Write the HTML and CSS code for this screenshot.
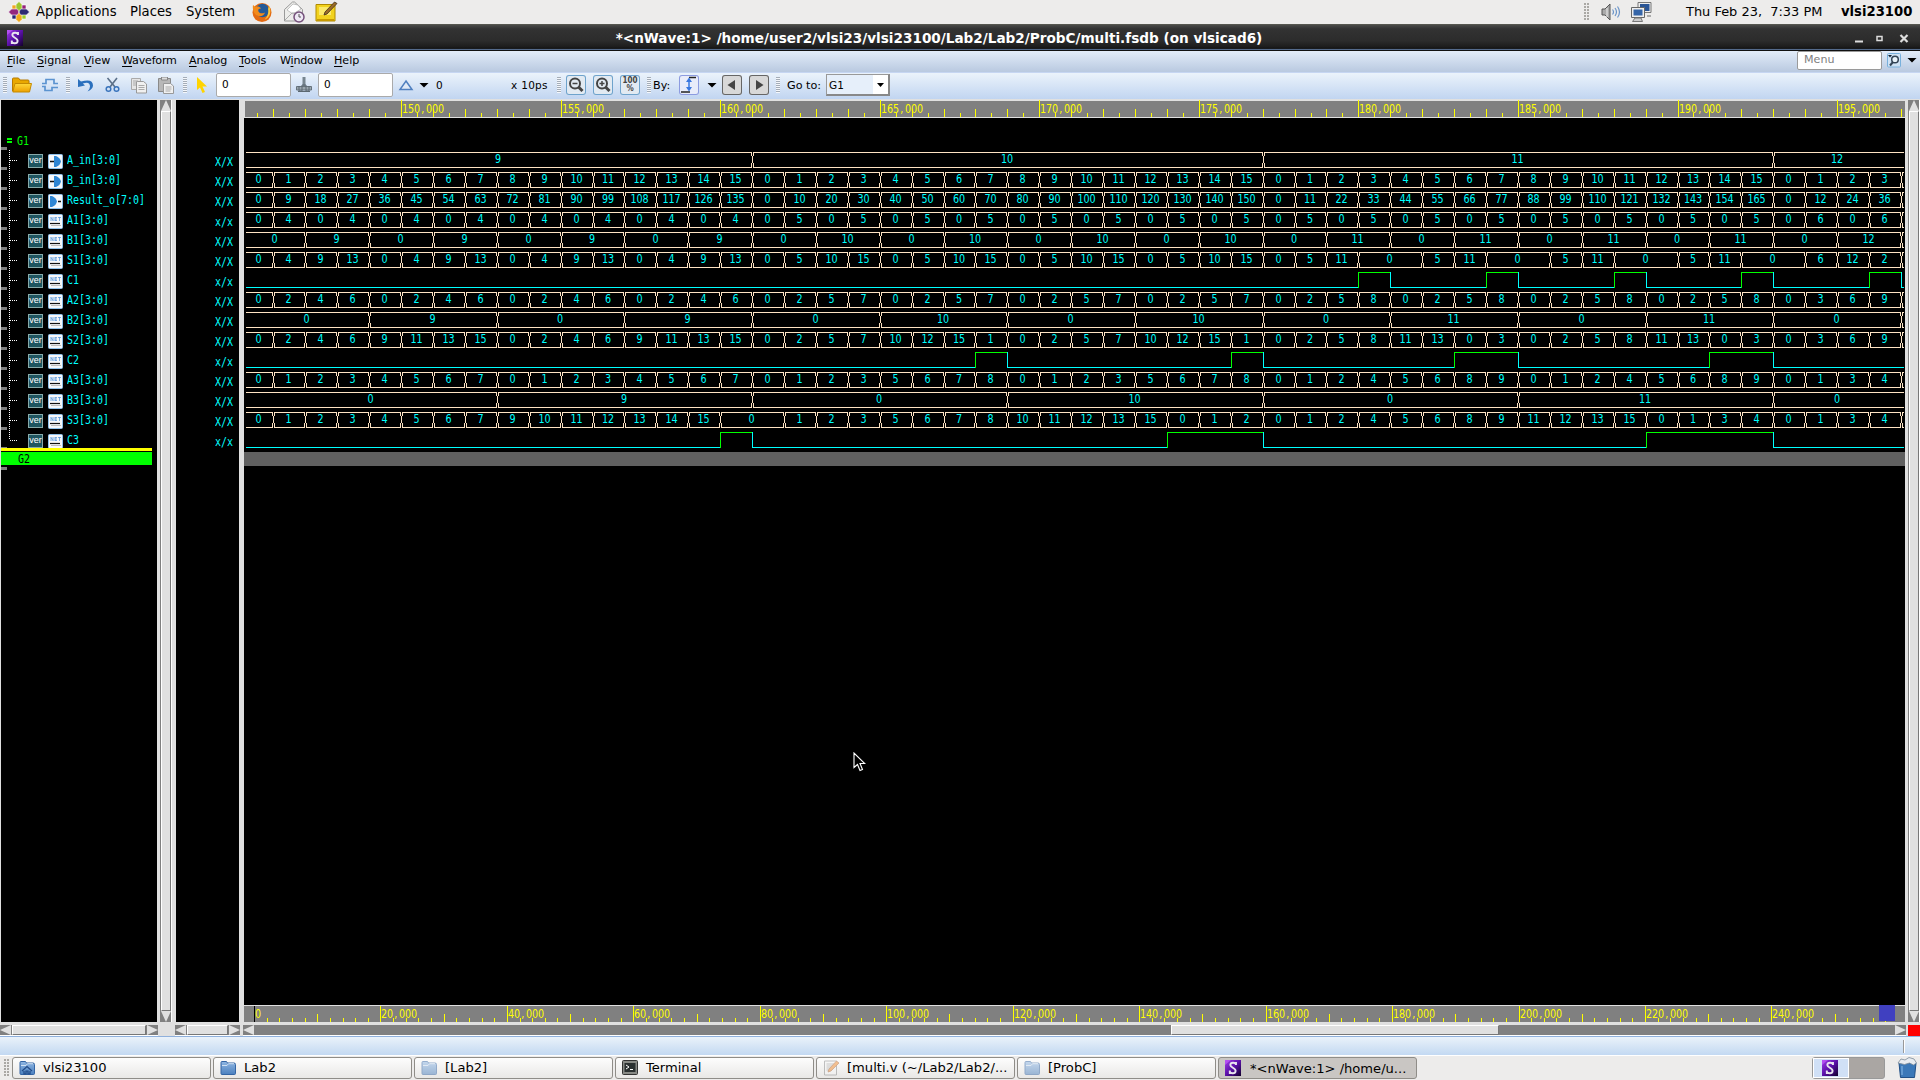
FILE: index.html
```html
<!DOCTYPE html>
<html lang="en">
<head>
<meta charset="utf-8">
<title>nWave</title>
<link rel="stylesheet" href="styles.css">
</head>
<body>
<svg width="0" height="0" class="defs">
  <defs>
    <linearGradient id="purple" x1="0" y1="0" x2="1" y2="1"><stop offset="0" stop-color="#a03ce8"/><stop offset=".5" stop-color="#5a10a8"/><stop offset="1" stop-color="#12002c"/></linearGradient>
    <linearGradient id="gold" x1="0" y1="0" x2="0" y2="1"><stop offset="0" stop-color="#ffd83a"/><stop offset="1" stop-color="#eda000"/></linearGradient>
    <linearGradient id="blue" x1="0" y1="0" x2="0" y2="1"><stop offset="0" stop-color="#8fb6e2"/><stop offset="1" stop-color="#4b80bf"/></linearGradient>
    <symbol id="nwave" viewBox="0 0 16 16"><rect width="16" height="16" fill="url(#purple)"/><path d="M0 5 6 0H0z" fill="#c860ff" opacity=".6"/><path d="M11 4.5C10.500 2.200 5.500 1.800 5.300 5c-.1 2.600 5.600 3 5.300 6-.3 3.400-5.400 2.700-6 .2M11 2v3M4.800 10.500v3.500" fill="none" stroke="#e8e4ee" stroke-width="1.900"/></symbol>
    <symbol id="folder" viewBox="0 0 16 16"><path d="M1 13.500V2.500q0-1 1-1h4.500l1 1.500H14q1.500 0 1.500 1.500v9q0 1-1 1H2q-1 0-1-1z" fill="url(#blue)" stroke="#3465a4"/><path d="M2 5.500h5l1.500-1.800H14" fill="none" stroke="#cfe0f3"/></symbol>
  </defs>
</svg>

<header class="panel">
  <svg class="start" width="22" height="22" viewBox="0 0 22 22"><g stroke="#fff" stroke-width=".6"><path d="M4 4h5v5H4z" fill="#efa724"/><path d="M13 4h5v5h-5z" fill="#932279"/><path d="M4 13h5v5H4z" fill="#262577"/><path d="M13 13h5v5h-5z" fill="#9ccd2a"/><path d="M11 .5 8 3.500v6l3 1.500 3-1.500v-6z" fill="#9bc62e"/><path d="M11 21.500 8 18.500v-6l3-1.500 3 1.500v6z" fill="#f0a81c"/><path d="M.5 11l3-3h6l1.500 3-1.500 3h-6z" fill="#94267e"/><path d="M21.500 11l-3-3h-6L11 11l1.500 3h6z" fill="#2d2a72"/></g></svg>
  <span class="apps">Applications</span><span class="places">Places</span><span class="system">System</span>
  <svg width="22" height="22" viewBox="0 0 22 22"><circle cx="11" cy="11.500" r="9.500" fill="#e36a12"/><circle cx="11.500" cy="9.500" r="6.800" fill="#235a98"/><path d="M2 4c1 1 2 2 4 1.500 2 0 3 .5 4 2-3 0-3 2-2.500 3 1 2 4 2.500 6.500 1-1 4-7 5-10 1.500C2 10.500 1.500 7 2 4z" fill="#f28a1a"/><path d="M18 5c3 5 1 12-5 14 3-2 5-7 4-11z" fill="#f9c840"/></svg>
  <svg class="mail" width="22" height="22" viewBox="0 0 22 22"><path d="M1.500 8.500 9.500 1h2l8 7.500V20h-18z" fill="#ececea" stroke="#999"/><path d="M4 9 10 3l5 1 3 4-8 5z" fill="#fff" stroke="#aaa" stroke-width=".7"/><path d="m2 19 7-7h3l6 7" fill="none" stroke="#aaa"/><circle cx="16" cy="16" r="5" fill="#eee8f4" stroke="#75507b" stroke-width="1.500"/><path d="M16 13v3h2" stroke="#555" fill="none"/></svg>
  <svg class="note" width="23" height="22" viewBox="0 0 23 22"><path d="M1 3.500h19V20H1z" fill="#f2d21e" stroke="#b08a00"/><path d="M4 6h12v8H4z" fill="#fbe96a"/><path d="M2 18h17v2H2z" fill="#c89a00"/><path d="m9 14 1-3L19.500 1 22 2.500 12 13z" fill="#9a6a28" stroke="#40301a" stroke-width=".8"/></svg>
  <i class="grip tray"></i>
  <svg class="sound" width="20" height="20" viewBox="0 0 20 20"><path d="M1 7h3l5-5v16l-5-5H1z" fill="#aaa" stroke="#555"/><path d="M6 6v9" stroke="#eee"/><path d="M11.500 7.500q2 2.500 0 5M14 6q3 4 0 8M16.500 4.500q4 5.500 0 11" fill="none" stroke="#6a94c8" stroke-width="1.200"/></svg>
  <svg class="net" width="22" height="22" viewBox="0 0 22 22"><path d="M8 1.500h13v10H8z" fill="#eee" stroke="#777"/><path d="M10 3h9.500v7H10z" fill="#2a5596"/><path d="M17 14h4v2h-4z" fill="#aaa"/><path d="M1.500 6.500h13v10h-13z" fill="#eee" stroke="#666"/><path d="M3.500 8.500h9v6h-9z" fill="#3565a8"/><path d="M5 17h6l1.500 3.500h-10z" fill="#ccc" stroke="#777"/></svg>
  <span class="clock">Thu Feb 23,&nbsp; 7:33 PM</span><b class="user">vlsi23100</b>
</header>

<div class="title">
  <svg class="appicon" width="16" height="16"><use href="#nwave"/></svg>
  <b>*&lt;nWave:1&gt; /home/user2/vlsi23/vlsi23100/Lab2/Lab2/ProbC/multi.fsdb (on vlsicad6)</b>
  <svg width="60" height="12" viewBox="0 0 60 12" class="winctl"><path d="M0 8.500h8" stroke="#ddd" stroke-width="2"/><path d="M22 3.500h5v4h-5z" fill="none" stroke="#ddd" stroke-width="1.500"/><path d="m45.500 2 7 7m0-7-7 7" stroke="#ddd" stroke-width="2.200"/></svg>
</div>

<nav class="menubar">
  <span><u>F</u>ile</span><span><u>S</u>ignal</span><span><u>V</u>iew</span><span><u>W</u>aveform</span><span><u>A</u>nalog</span><span><u>T</u>ools</span><span>W<u>i</u>ndow</span><span><u>H</u>elp</span>
  <div class="menusearch">Menu</div>
  <svg width="14" height="15" viewBox="0 0 14 15"><rect x=".5" y=".5" width="13" height="13.500" rx="1" fill="#cfe2f4" stroke="#78b0dc"/><circle cx="8" cy="6.500" r="3.300" fill="#e8f2fa" stroke="#345" stroke-width="1.500"/><path d="m6 9-3 3.500" stroke="#345" stroke-width="2"/><path d="M1 2h4L3 4.500z" fill="#123"/></svg>
  <i class="drop menudrop"></i>
</nav>

<div class="toolbar">
  <i class="bars"></i>
  <svg class="m5" width="20" height="16" viewBox="0 0 20 16"><path d="M.5 14V2q0-1 1-1h5l1.500 2h8q1 0 1 1v3" fill="#e9a800" stroke="#b87a00"/><path d="M.8 15 3 6.500h16.500L17.500 15z" fill="url(#gold)" stroke="#c58a00"/></svg>
  <svg class="m9" width="18" height="16" viewBox="0 0 18 16"><path d="M1 6.500h4V2.500h8v4h4M1 9.500h3v4h7v-3h6" fill="none" stroke="#5b93d0" stroke-width="1.700"/></svg>
  <i class="bars m7"></i>
  <svg class="m8" width="16" height="16" viewBox="0 0 16 16"><path d="M0 2v8l7-1.500-2.200-2Q12 4 12 9.500q0 2.500-2.500 5Q15 12 15 8.500 15 1 3 4.500z" fill="#2b70bd"/></svg>
  <svg class="m11" width="15" height="16" viewBox="0 0 15 16"><path d="M2.500 1 10 10M12 1 5 10" stroke="#5a6f88" stroke-width="1.600"/><circle cx="3.500" cy="12" r="2.300" fill="none" stroke="#3a74bc" stroke-width="1.500"/><circle cx="11.500" cy="12" r="2.300" fill="none" stroke="#3a74bc" stroke-width="1.500"/></svg>
  <svg class="m11" width="16" height="17" viewBox="0 0 16 17"><path d="M.5 1.500h9v11h-9z" fill="#e5e5e5" stroke="#aaa"/><path d="M5.500 4.500h7L15.500 7v9h-10z" fill="#f0f0f0" stroke="#999"/><path d="M2 4h5M2 6h3M2 8h3M7.500 8.500h6M7.500 10.500h6M7.500 12.500h6" stroke="#aaa"/></svg>
  <svg class="m11" width="16" height="17" viewBox="0 0 16 17"><path d="M.5 1.500h12v13H.5z" fill="#b8b8b8" stroke="#8a8a8a"/><path d="M3.500 0h6v3h-6z" fill="#ddd" stroke="#888"/><path d="M5.500 6.500h7l3 2.500v7.500h-10z" fill="#f0f0f0" stroke="#999"/><path d="M7.500 10h6M7.500 12h6M7.500 14h5" stroke="#aaa"/></svg>
  <i class="bars m9"></i>
  <svg class="m10" width="10" height="16" viewBox="0 0 10 16"><path d="M0 0v13l3-2.500L5.500 16 8 15 5.500 9.500H10z" fill="#ffd400"/></svg>
  <div class="field m9">0</div>
  <svg class="m5" width="16" height="16" viewBox="0 0 16 16"><path d="M8 0v9" stroke="#77858f" stroke-width="3"/><path d="M.5 9.500h15V13H.5z" fill="#9aa6ae" stroke="#66737c"/><path d="M3 9v5h3V8h4v6h3V9" fill="none" stroke="#5a6770"/><path d="M2 14.500h12" stroke="#5a6770"/></svg>
  <div class="field m6">0</div>
  <svg class="m5" width="16" height="12" viewBox="0 0 16 12"><path d="M8 2 14 10.500H2z" fill="#dfe9f6" stroke="#4f7fbf" stroke-width="1.500"/></svg>
  <i class="drop m5"></i>
  <span class="delta">0</span>
  <span class="scale">x 10ps</span>
  <i class="bars m8"></i>
  <svg class="btn m5" width="20" height="20" viewBox="0 0 20 20"><circle cx="9" cy="8.500" r="5" fill="none" stroke="#444" stroke-width="2"/><path d="m12.500 12 4 4" stroke="#444" stroke-width="3"/><path d="M6.500 8.500h5" stroke="#444" stroke-width="1.500"/></svg>
  <svg class="btn m7" width="20" height="20" viewBox="0 0 20 20"><circle cx="9" cy="8.500" r="5" fill="none" stroke="#444" stroke-width="2"/><path d="m12.500 12 4 4" stroke="#444" stroke-width="3"/><path d="M6.500 8.500h5M9 6v5" stroke="#444" stroke-width="1.500"/></svg>
  <div class="btn hundred m7"><span>100</span><span>%</span></div>
  <i class="bars m7"></i>
  <span class="by">By:</span>
  <svg class="btn lav" width="20" height="20" viewBox="0 0 20 20"><path d="M10 2.500h7M2 17h9" stroke="#222" stroke-width="1.300"/><path d="M10 5v10" stroke="#3a78e0" stroke-width="1.500"/><path d="M10 2.500 13 7H7zM10 16.500 7 12h6z" fill="#3a78e0"/></svg>
  <i class="drop m8"></i>
  <svg class="btn gray m5" width="20" height="20" viewBox="0 0 20 20"><path d="M13 5v10L5.500 10z" fill="#444"/></svg>
  <svg class="btn gray m7" width="20" height="20" viewBox="0 0 20 20"><path d="M7 5v10l7.500-5z" fill="#444"/></svg>
  <i class="bars m7"></i>
  <span class="goto">Go to:</span>
  <div class="select">G1<i><i class="drop"></i></i></div>
</div>

<main>
  <section class="signals" id="signals"></section>
  <div class="vbar left"><i class="up"></i><i class="thumb"></i><i class="down"></i></div>
  <section class="values" id="values"></section>
  <svg id="wave" width="1661" height="922" viewBox="244 100 1661 922"></svg>
  <div class="vbar right"><i class="up"></i><i class="thumb"></i><i class="down"></i></div>
</main>

<div class="hbars">
  <div class="hbar h1"><i class="lt"></i><i class="thumb"></i><i class="rt"></i></div>
  <div class="hbar h2"><i class="lt"></i><i class="thumb"></i><i class="rt"></i></div>
  <div class="hbar h3"><i class="lt"></i><i class="thumb"></i><i class="rt"></i></div>
  <div class="red"></div>
</div>
<div class="status"><i></i></div>

<footer>
  <i class="grip"></i>
  <div class="task"><svg width="16" height="16" viewBox="0 0 16 16"><use href="#folder"/><path d="m3 11 5-4.500 5 4.500M5 11v3h2v-3h2v3h2v-3" fill="none" stroke="#204a87" stroke-width="1.200"/></svg><span>vlsi23100</span></div>
  <div class="task"><svg width="16" height="16"><use href="#folder"/></svg><span>Lab2</span></div>
  <div class="task dim"><svg width="16" height="16"><use href="#folder"/></svg><span>[Lab2]</span></div>
  <div class="task"><svg width="16" height="16" viewBox="0 0 16 16"><rect x=".5" y=".5" width="15" height="14" rx="1" fill="#888a85" stroke="#333"/><path d="M2.500 3h11v9h-11z" fill="#2a3030"/><path d="m4 5 3 2-3 2M8 9.500h3" stroke="#fff" fill="none"/></svg><span>Terminal</span></div>
  <div class="task dim"><svg width="16" height="16" viewBox="0 0 16 16"><path d="M1.500 1h12v14h-12z" fill="#f4f4f4" stroke="#888"/><path d="M3.500 4h8M3.500 6h7M3.500 8h5M3.500 10h4" stroke="#999"/><path d="m5 12 1-3 7.500-8L16 3l-8 8z" fill="#f08a2c" stroke="#a0501a" stroke-width=".7"/></svg><span>[multi.v (~/Lab2/Lab2/...</span></div>
  <div class="task dim"><svg width="16" height="16"><use href="#folder"/></svg><span>[ProbC]</span></div>
  <div class="task active"><svg width="16" height="16"><use href="#nwave"/></svg><span>*&lt;nWave:1&gt; /home/u...</span></div>
  <div class="pager"><div><svg width="16" height="16"><use href="#nwave"/></svg></div></div>
  <svg class="trash" width="21" height="22" viewBox="0 0 21 22"><path d="M2 6h17l-1.500 14.500h-14z" fill="#3a78b8" stroke="#1f4f86"/><path d="M1 6 4 2l4 1 4-2.500L17 2l2.500 4-3 2-4-2-5 1.500z" fill="#e8ecf0" stroke="#7b8a98" stroke-width=".8"/><path d="M5 9v9" stroke="#6fa4d8" stroke-width="1.500"/></svg>
</footer>

<svg class="pointer" width="13" height="20" viewBox="0 0 13 20"><path d="M1 1v14.500l3.500-3L7 18.500l2.500-1L7 11.500h4.800z" fill="#000" stroke="#fff" stroke-width="1.100"/></svg>

<script src="wave.js"></script>
</body>
</html>
```
FILE: styles.css
```css
* { box-sizing: border-box; }
body { margin: 0; width: 1920px; height: 1080px; overflow: hidden; background: #e0e0e0; font-family: "DejaVu Sans", sans-serif; color: #000; display: flex; flex-direction: column; }
svg { display: block; flex: none; }
.defs { position: absolute; }
i { display: block; flex: none; }

.panel { height: 25px; flex: none; display: flex; align-items: center; background: #edeceb; border-bottom: 1px solid #55564f; font-size: 13.2px; line-height: 22px; white-space: nowrap; padding: 0 7px 1px 8px; }
.start { margin-right: 6px; }
.apps { width: 94px; }
.places { width: 56px; }
.system { width: 65px; }
.mail { margin-left: 10px; }
.note { margin-left: 10px; }
.grip { width: 6px; height: 18px; background: radial-gradient(circle at 1px 1px, #a8a6a2 0.7px, transparent 1px) 0 0 / 3px 3px; }
.tray { margin-left: auto; margin-right: 11px; }
.net { margin-left: 9px; }
.clock { width: 155px; margin-left: 34px; font-size: 12.95px; }
.user { width: 72px; }

.title { height: 26px; flex: none; display: flex; align-items: center; background: linear-gradient(#4a4a48, #323232 15%, #2c2c2c 60%, #1c1c1c 85%, #111 90%, #5a7296 94%, #111 97%); color: #fff; font-size: 13.6px; padding: 0 5px 0 7px; }
.title b { flex: 1; text-align: center; white-space: nowrap; margin-bottom: 1px; }
.winctl { margin-top: 1px; }

.menubar { height: 22px; flex: none; display: flex; align-items: center; padding: 0 3px 3px 7px; background: linear-gradient(#e2ecf9, #b9c9e0); border-bottom: 1px solid #c6d6f2; font-size: 11.1px; white-space: nowrap; }
.menubar span { flex: none; }
.menubar span:nth-of-type(1) { width: 30px; }
.menubar span:nth-of-type(2) { width: 47px; }
.menubar span:nth-of-type(3) { width: 38px; }
.menubar span:nth-of-type(4) { width: 67px; letter-spacing: -0.2px; }
.menubar span:nth-of-type(5) { width: 50px; }
.menubar span:nth-of-type(6) { width: 41px; }
.menubar span:nth-of-type(7) { width: 54px; letter-spacing: -0.2px; }
.menubar span:nth-of-type(8) { width: 40px; }
.menubar u { text-underline-offset: 2px; }
.menusearch { width: 85px; height: 19px; margin-left: auto; margin-right: 5px; border: 1px solid #9a9a9a; border-radius: 2px; background: #fff; color: #808080; padding: 0 6px; line-height: 16px; }
.drop { width: 10px; height: 5px; background: #000; clip-path: polygon(0 0, 100% 0, 50% 100%); }
.menudrop { margin-left: 6px; }

.toolbar { height: 26px; flex: none; display: flex; align-items: center; padding: 0 0 2px 3px; background: linear-gradient(#ebf3fb, #c1d5f1); font-size: 11.2px; white-space: nowrap; }
.bars { width: 4px; height: 16px; background: repeating-linear-gradient(#a4adb8 0 1px, #f4f7fb 1px 2px); }
.m5 { margin-left: 5px; } .m6 { margin-left: 6px; } .m7 { margin-left: 7px; } .m8 { margin-left: 8px; }
.m9 { margin-left: 9px; } .m10 { margin-left: 10px; } .m11 { margin-left: 11px; }
.field { width: 75px; height: 24px; border: 1px solid #aaa; border-radius: 2px; background: #fff; padding: 0 5px; line-height: 20px; font-size: 10.500px; }
.delta { margin-left: 7px; width: 75px; font-size: 10.500px; }
.scale { width: 38px; font-size: 10.500px; letter-spacing: .3px; }
.btn { width: 20px; height: 20px; border-radius: 3px; background: #e2eaf2; box-shadow: inset 0 0 0 1px #6ea3cc; }
.hundred { display: flex; flex-direction: column; align-items: center; justify-content: center; font: bold 8px/8px "DejaVu Sans Condensed", "DejaVu Sans", sans-serif; color: #444; }
.lav { box-shadow: inset 0 0 0 1px #8c9be0; background: #e8ecfa; }
.gray { box-shadow: inset 0 0 0 1px #666; background: #d8d8d8; }
.by { width: 26px; margin-left: 2px; }
.goto { width: 39px; margin-left: 7px; }
.select { width: 64px; height: 22px; background: #e6effa; border: 1px solid #999; border-right: 2px solid #888; border-bottom: 2px solid #888; display: flex; justify-content: space-between; align-items: center; padding-left: 2px; font-size: 10.500px; }
.select > i { width: 15px; height: 19px; background: #fff; padding: 8px 0 0 4px; }
.select .drop { width: 7px; height: 4px; }

main { height: 923px; flex: none; display: flex; padding: 1px 0 0 1px; }
.signals { width: 156px; background: #000; padding-top: 30px; overflow: hidden; }
.row { height: 20px; display: flex; position: relative; align-items: center; color: #0ff; font: 12px "DejaVu Sans Mono", monospace; }
.row::after { content: ""; position: absolute; left: 0; top: 17px; width: 6px; height: 3px; background: #808080; }
.row .txt { transform: scaleX(.83); transform-origin: left; white-space: pre; line-height: 16px; }
.row.group { color: #0f0; padding: 1px 0 0 6px; }
.row.group .eq { width: 5px; height: 5px; border: solid #0f0; border-width: 2px 0; margin-right: 5px; }
.tree { width: 20px; height: 20px; margin: 0 0 0 7px; }
.ver { width: 15px; height: 14px; border: 1px solid #8aa; background: #1f5560; color: #fff; font: 9px/11px "Liberation Sans", sans-serif; text-align: center; margin-right: 5px; position: relative; top: 1px; }
.kind { margin-right: 4px; position: relative; top: 1px; }
.row.sel { width: 151px; height: 17px; margin-top: -2px; border-top: 3px solid #ff0; padding: 1px 0 0 17px; color: #000; background: linear-gradient(#000 1px, #0f0 1px); }
.row.sel::after { top: 16px; }
.vbar { width: 12px; margin: 0 4px 0 3px; background: #808080; border-left: 1px solid #808080; border-right: 1px solid #fff; display: flex; flex-direction: column; }
.vbar.right { margin-right: 0; }
.up, .down { height: 11px; background: #e0e0e0; }
.up { clip-path: polygon(50% 0, 100% 100%, 0 100%); }
.down { clip-path: polygon(0 0, 100% 0, 50% 100%); }
.vbar .thumb { flex: 1; background: #e0e0e0; border: 1px solid #fff; border-right: 1px solid #777; border-bottom-color: #777; }
.values { width: 63px; background: #000; padding-top: 52px; margin-right: 5px; }
.values div { height: 20px; padding-left: 39px; color: #0ff; font: 12px/20px "DejaVu Sans Mono", monospace; }
.values span { display: inline-block; transform: scaleX(.83); transform-origin: left; }
#wave { background: #000; }
#wave text { font: 12px "DejaVu Sans", sans-serif; }

.hbars { height: 14px; flex: none; padding: 3px 0 0; display: flex; }
.hbar { height: 11px; background: #808080; display: flex; border-bottom: 1px solid #fff; }
.h1 { width: 158px; margin-right: 17px; }
.h2 { width: 65px; margin-right: 3px; }
.h3 { width: 1663px; margin-right: 2px; }
.lt, .rt { width: 11px; background: #e0e0e0; }
.lt { clip-path: polygon(0 50%, 100% 0, 100% 100%); }
.rt { clip-path: polygon(0 0, 100% 50%, 0 100%); }
.hbar .thumb { flex: 1; background: #e0e0e0; border: 1px solid #fff; border-right-color: #777; border-bottom-color: #777; margin: 0 1px; }
.h3 .thumb { flex: none; width: 328px; margin-left: 917px; margin-right: auto; }
.red { width: 12px; height: 12px; background: #f00; }

.status { height: 19px; flex: none; background: linear-gradient(#eaf2fa, #c3d9f2); border-top: 1px solid #8fb0dc; display: flex; align-items: center; justify-content: flex-end; padding-right: 15px; }
.status i { width: 2px; height: 13px; background: #999; border-right: 1px solid #fff; }

footer { height: 25px; flex: none; background: #edeceb; border-top: 1px solid #fff; display: flex; align-items: center; padding-left: 4px; font-size: 13.1px; }
footer .grip { margin-right: 2px; }
.task { width: 199px; height: 22px; margin-right: 2px; border: 1px solid #8f8d88; border-radius: 3px; background: linear-gradient(#fdfdfd, #e9e8e6); display: flex; align-items: center; padding-left: 6px; gap: 8px; flex: none; white-space: nowrap; }
.task span { margin-bottom: 2px; }
.task.dim svg { opacity: .5; }
.task.active { background: #c9c6c3; }
.task.active span { margin: 0 0 0 1px; }
.pager { width: 73px; height: 22px; margin-left: auto; background: #aaa6a3; border-radius: 3px; border: 1px solid #999; }
.pager div { width: 36px; height: 20px; border: 1px solid #fff; background: #d0e0f6; padding: 1px 0 0 8px; }
.trash { margin: 0 2px 0 12px; }
.pointer { position: absolute; left: 853px; top: 752px; }
```
FILE: wave.js
```js
const SIGNALS = ['A_in[3:0]', 'B_in[3:0]', 'Result_o[7:0]', 'A1[3:0]', 'B1[3:0]', 'S1[3:0]', 'C1', 'A2[3:0]', 'B2[3:0]', 'S2[3:0]', 'C2', 'A3[3:0]', 'B3[3:0]', 'S3[3:0]', 'C3'];
const LEFT = 246, RIGHT = 1904;

// 4x4 shift-and-add multiplier: every internal bus at time t (in thousands)
function sample(t) {
  const a = 9 + Math.floor((t - 145) / 16), b = (t - 145) % 16;
  const a1 = b & 1 ? a >> 1 : 0, b1 = b & 2 ? a : 0, s1 = a1 + b1;
  const a2 = s1 >> 1, b2 = b & 4 ? a : 0, s2 = a2 + b2;
  const a3 = s2 >> 1, b3 = b & 8 ? a : 0, s3 = a3 + b3;
  return [a, b, a * b, a1, b1, s1 & 15, s1 >> 4, a2, b2, s2 & 15, s2 >> 4, a3, b3, s3 & 15, s3 >> 4];
}

const xAt = t => Math.round(401.1 + 31.91 * (t - 150));

function label(x, y, str, color) {
  const pos = [...str].map((c, i) => (i * 7.5 + (c === ',' ? 1.5 : 0)).toFixed(1)).join(' ');
  return `<text transform="translate(${x} ${y}) scale(.8 1)" x="${pos}" fill="${color}">${str}</text>`;
}
const line = (d, color) => `<path d="${d}" stroke="${color}" fill="none" shape-rendering="crispEdges"/>`;

function segments(row) {
  const out = [];
  for (let t = 145; t <= 197; t++) {
    const v = sample(t)[row], last = out[out.length - 1];
    if (last && last.v === v) continue;
    if (last) last.end = xAt(t);
    out.push({ v, start: out.length ? xAt(t) : LEFT, end: RIGHT });
  }
  return out;
}

function bus(row, top) {
  let d = '', t = '';
  segments(row).forEach((s, i) => {
    const l = i ? s.start + 1 : s.start, r = s.end === RIGHT ? RIGHT : s.end;
    d += `M${l} ${top + .5}H${r}M${l} ${top + 15.5}H${r}`;
    if (i) for (const [x, y1, y2] of [[-1, 0, 4], [1, 0, 4], [0, 4, 11], [-1, 11, 16], [1, 11, 16]])
      d += `M${s.start + x + .5} ${top + y1}V${top + y2}`;
    if (r - l > 10) {
      const str = String(s.v), end = s.end === RIGHT ? 1902 : s.end;
      t += label((l + end) / 2 - 1 - str.length * 3, top + 11, str, '#0ff');
    }
  });
  return line(d, '#ffe4c4') + t;
}

function bit(row, top) {
  let lo = '', hi = '';
  segments(row).forEach((s, i) => {
    if (s.v) hi += `M${s.start + .5} ${top + 16}V${top + .5}H${s.end}`;
    else lo += (i ? `M${s.start + .5} ${top}V${top + 15.5}` : `M${s.start} ${top + 15.5}`) + `H${s.end}`;
  });
  return line(lo, '#0ff') + line(hi, '#0f0');
}

let svg = '<rect x="244" y="100" width="1661" height="18" fill="#e0e0e0"/><rect x="245" y="101" width="1660" height="16" fill="#808080"/>';
let ticks = '';
for (let h = 292; h <= 394; h++) {
  const t = h / 2, x = xAt(t) + .5;
  if (x < 250 || x > 1903) continue;
  ticks += `M${x} ${t % 5 === 0 ? 100 : h % 2 ? 113 : 109}V117`;
  if (t % 5 === 0) svg += label(x + .5, 112.5, t + ',000', '#ff0');
}
ticks += 'M257.5 113V117';
svg += line(ticks, '#ff0');
SIGNALS.forEach((n, i) => { svg += (n[0] === 'C' ? bit : bus)(i, 152 + 20 * i); });
svg += '<rect x="244" y="452" width="1661" height="14" fill="#606060"/>';

svg += '<rect x="244" y="1005" width="1661" height="17" fill="#808080"/><rect x="244" y="1005" width="1661" height="1" fill="#e0e0e0"/>';
ticks = '';
for (let t = 0; t <= 258; t += 2) {
  const x = Math.round(254 + t * 6.3225) + .5;
  if (t) ticks += `M${x} ${t % 20 === 0 ? 1006 : t % 10 === 0 ? 1014 : 1018}V1022`;
  if (t % 20 === 0) svg += label(x + .5, 1018, t ? t + ',000' : '0', '#ff0');
}
svg += line(ticks, '#ff0') + line('M254.5 1006V1022', '#000');
svg += '<rect x="1879" y="1005" width="16" height="16" fill="#4040c0"/>';
document.getElementById('wave').innerHTML = svg;

const frame = '<rect x=".5" y=".5" width="14" height="14" rx="1" fill="#f6f8fb" stroke="#8fc0ea"/>';
function icon(i) {
  if (i < 2) return frame + '<path d="M2 7.500h4" stroke="#111" stroke-width="1.500"/><path d="M6 2v11h2q4-1.500 5-5.500Q12 3.500 8 2z" fill="#2f86d4"/>';
  if (i === 2) return frame + '<path d="M2 2v11h2q4-1.500 5-5.500Q8 3.500 4 2z" fill="#2f86d4"/><path d="M10 7.500h3" stroke="#111" stroke-width="1.500"/>';
  return frame + '<path d="M3 3v4M3 3.500 5 6.500M5 3v4M7 3v4M7 3.500h2M7 5h2M7 6.500h2M10 3.500h3M11.500 3v4" stroke="#5a98da" stroke-width=".8"/><path d="M2 9.500h10" stroke="#111" stroke-width="1.200"/><path d="M3 11.500h10" stroke="#bbb"/>';
}
document.getElementById('signals').innerHTML =
  '<div class="row group"><i class="eq"></i><span class="txt">G1</span></div>' +
  SIGNALS.map((n, i) => `<div class="row"><svg class="tree" viewBox="0 0 20 20"><path d="M1.500 0V${i === 14 ? 10 : 20}M2 10.500H9" stroke="#fff" stroke-dasharray="1 1" shape-rendering="crispEdges"/></svg><span class="ver">ver</span><svg class="kind" width="15" height="15">${icon(i)}</svg><span class="txt">${n}</span></div>`).join('') +
  '<div class="row sel"><span class="txt">G2</span></div>';
document.getElementById('values').innerHTML =
  SIGNALS.map((n, i) => `<div><span>${n[0] === 'C' || i === 3 ? 'x/x' : 'X/X'}</span></div>`).join('');
```
